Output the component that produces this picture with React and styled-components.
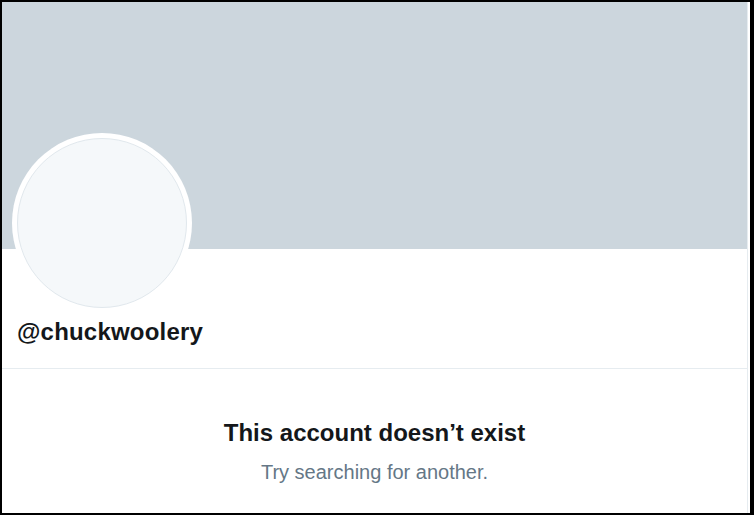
import React from 'react';
import styled, { createGlobalStyle } from 'styled-components';

const GlobalStyle = createGlobalStyle`
  html, body {
    margin: 0;
    padding: 0;
    background: #000;
  }
  body {
    font-family: "Liberation Sans", Arial, sans-serif;
    -webkit-font-smoothing: antialiased;
  }
`;

const Frame = styled.div`
  box-sizing: border-box;
  width: 754px;
  height: 515px;
  border-style: solid;
  border-color: #000;
  border-width: 2px 4px 2px 2px;
  background: #fff;
  overflow: hidden;
`;

const Page = styled.div`
  height: 100%;
  margin-right: 2px;
  border-right: 1px solid #e6ecf0;
  display: flex;
  flex-direction: column;
`;

const Banner = styled.div`
  height: 247px;
  background: #ccd6dd;
  flex-shrink: 0;
`;

const ProfileHeader = styled.div`
  padding: 0 0 0 10px;
  height: 119px;
  border-bottom: 1px solid #e6ecf0;
`;

const AvatarRing = styled.div`
  box-sizing: border-box;
  width: 180px;
  height: 180px;
  margin-top: -116px;
  padding: 5px;
  border-radius: 50%;
  background: #fff;
`;

const AvatarInner = styled.div`
  box-sizing: border-box;
  width: 100%;
  height: 100%;
  border-radius: 50%;
  background: #f5f8fa;
  border: 1px solid #e1e8ed;
`;

const Handle = styled.div`
  margin: 4px 0 0 5px;
  font-size: 24px;
  line-height: 30px;
  font-weight: 700;
  letter-spacing: 0.2px;
  color: #14171a;
`;

const Empty = styled.div`
  display: flex;
  flex-direction: column;
  align-items: center;
  padding-top: 49px;
`;

const Title = styled.div`
  font-size: 24px;
  line-height: 30px;
  font-weight: 700;
  color: #14171a;
`;

const Subtitle = styled.div`
  margin-top: 12px;
  font-size: 20px;
  line-height: 24px;
  color: #657786;
`;

export default function App() {
  return (
    <>
      <GlobalStyle />
      <Frame>
        <Page>
          <Banner />
          <ProfileHeader>
            <AvatarRing>
              <AvatarInner />
            </AvatarRing>
            <Handle>@chuckwoolery</Handle>
          </ProfileHeader>
          <Empty>
            <Title>This account doesn’t exist</Title>
            <Subtitle>Try searching for another.</Subtitle>
          </Empty>
        </Page>
      </Frame>
    </>
  );
}
